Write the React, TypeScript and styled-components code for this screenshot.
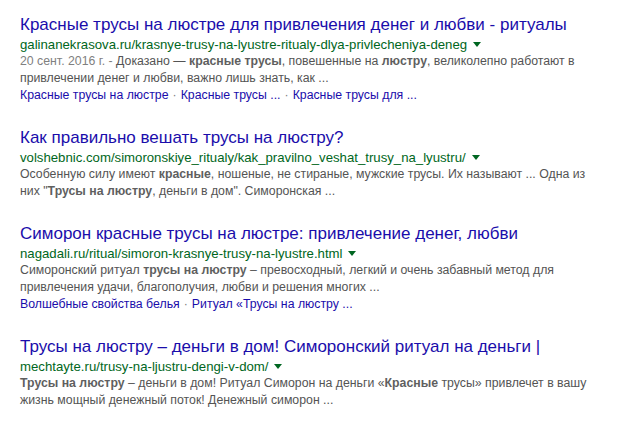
import React from "react";
import styled, { createGlobalStyle } from "styled-components";

const Global = createGlobalStyle`
  html, body { margin: 0; padding: 0; background: #fff; }
  body { font-family: Arial, "Liberation Sans", sans-serif; }
`;

const Page = styled.div`
  width: 640px;
  height: 427px;
  overflow: hidden;
  box-sizing: border-box;
  padding: 15px 0 0 20px;
  display: flex;
  flex-direction: column;
  gap: 24px;
  background: #fff;
`;

const Result = styled.div`
  display: flex;
  flex-direction: column;
`;

const Title = styled.a`
  font-size: 17px;
  line-height: 20px;
  color: #1a0dab;
  text-decoration: none;
  white-space: nowrap;
`;

const UrlRow = styled.div`
  display: flex;
  align-items: center;
  height: 18px;
  font-size: 13.2px;
  color: #006621;
  white-space: nowrap;
`;

const Arrow = styled.span`
  width: 0;
  height: 0;
  margin-left: 6px;
  margin-top: 1px;
  border-left: 4px solid transparent;
  border-right: 4px solid transparent;
  border-top: 5px solid #006621;
`;

const Snippet = styled.div`
  font-size: 12.3px;
  line-height: 17px;
  color: #545454;
  white-space: nowrap;
  b { font-weight: bold; color: #5f5f5f; }
`;

const DateText = styled.span`
  color: #808080;
`;

const Sitelinks = styled.div`
  font-size: 12.3px;
  line-height: 17px;
  color: #1a0dab;
  white-space: nowrap;
`;

const Dot = styled.span`
  color: #808080;
  margin: 0 4px;
`;

function Links({ items }: { items: string[] }) {
  return (
    <Sitelinks>
      {items.map((t, i) => (
        <React.Fragment key={i}>
          {i > 0 && <Dot>·</Dot>}
          <span>{t}</span>
        </React.Fragment>
      ))}
    </Sitelinks>
  );
}

export default function App() {
  return (
    <>
      <Global />
      <Page>
        <Result>
          <Title>Красные трусы на люстре для привлечения денег и любви - ритуалы</Title>
          <UrlRow>
            galinanekrasova.ru/krasnye-trusy-na-lyustre-ritualy-dlya-privlecheniya-deneg
            <Arrow />
          </UrlRow>
          <Snippet>
            <DateText>20 сент. 2016 г. - </DateText>Доказано — <b>красные трусы</b>, повешенные на <b>люстру</b>, великолепно работают в
          </Snippet>
          <Snippet>привлечении денег и любви, важно лишь знать, как ...</Snippet>
          <Links items={["Красные трусы на люстре", "Красные трусы ...", "Красные трусы для ..."]} />
        </Result>
        <Result>
          <Title>Как правильно вешать трусы на люстру?</Title>
          <UrlRow>
            volshebnic.com/simoronskiye_ritualy/kak_pravilno_veshat_trusy_na_lyustru/
            <Arrow />
          </UrlRow>
          <Snippet>
            Особенную силу имеют <b>красные</b>, ношеные, не стираные, мужские трусы. Их называют ... Одна из
          </Snippet>
          <Snippet>
            них "<b>Трусы на люстру</b>, деньги в дом". Симоронская ...
          </Snippet>
        </Result>
        <Result>
          <Title>Симорон красные трусы на люстре: привлечение денег, любви</Title>
          <UrlRow>
            nagadali.ru/ritual/simoron-krasnye-trusy-na-lyustre.html
            <Arrow />
          </UrlRow>
          <Snippet>
            Симоронский ритуал <b>трусы на люстру</b> – превосходный, легкий и очень забавный метод для
          </Snippet>
          <Snippet>привлечения удачи, благополучия, любви и решения многих ...</Snippet>
          <Links items={["Волшебные свойства белья", "Ритуал «Трусы на люстру ..."]} />
        </Result>
        <Result>
          <Title>Трусы на люстру – деньги в дом! Симоронский ритуал на деньги |</Title>
          <UrlRow>
            mechtayte.ru/trusy-na-ljustru-dengi-v-dom/
            <Arrow />
          </UrlRow>
          <Snippet>
            <b>Трусы на люстру</b> – деньги в дом! Ритуал Симорон на деньги «<b>Красные</b> трусы» привлечет в вашу
          </Snippet>
          <Snippet>жизнь мощный денежный поток! Денежный симорон ...</Snippet>
        </Result>
      </Page>
    </>
  );
}
